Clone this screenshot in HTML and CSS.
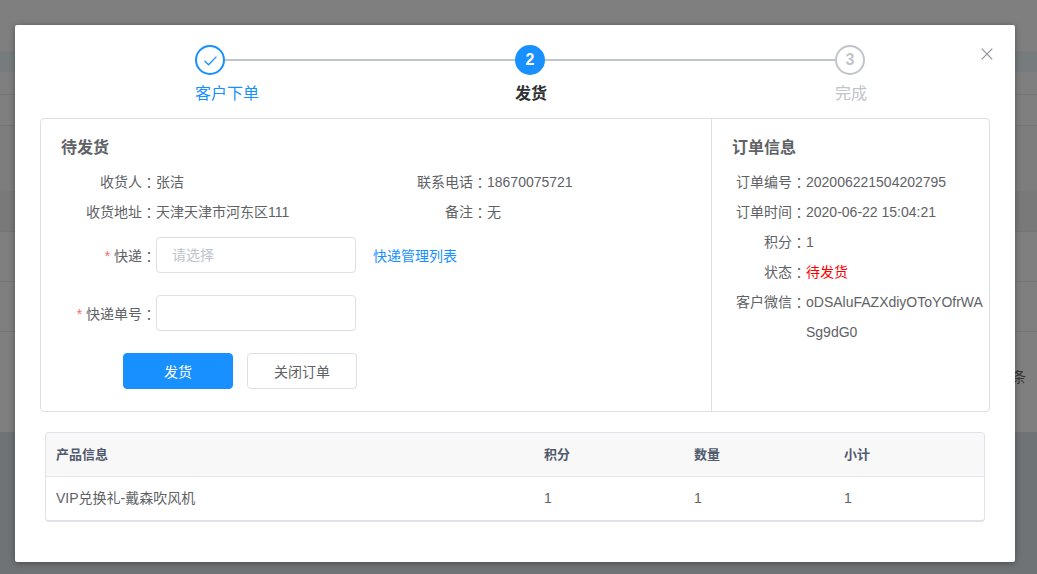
FILE: index.html
```html
<!DOCTYPE html>
<html>
<head>
  <meta charset="UTF-8" />
  <meta name="viewport" content="width=device-width, initial-scale=1.0"/>
  <title>发货</title>
  <link rel="stylesheet" href="styles.css">
</head>
<body>
  <!-- dimmed page behind the dialog -->
  <div class="page">
    <div class="band band-top"></div>
    <div class="band band-head"></div>
    <div class="band band-row band-22"></div>
    <div class="band band-row band-31"></div>
    <div class="band band-plain"></div>
    <div class="band band-row band-41"></div>
    <div class="band band-row band-50"></div>
    <div class="band band-row band-50"></div>
    <div class="band band-total"><span>条</span></div>
    <div class="band band-foot"></div>
  </div>

  <div class="mask">
    <div class="dialog">
      <svg class="close" viewBox="0 0 12 12" aria-label="关闭">
        <path d="M.7.7l10.6 10.6M11.3.7L.7 11.3" />
      </svg>

      <div class="steps">
        <div class="step done">
          <div class="step-head">
            <span class="step-icon">
              <svg viewBox="0 0 16 12"><path d="M1.5 6.2l4.4 4.4L14.5 1.8" /></svg>
            </span>
            <span class="step-line"></span>
          </div>
          <div class="step-title">客户下单</div>
        </div>
        <div class="step active">
          <div class="step-head">
            <span class="step-icon">2</span>
            <span class="step-line"></span>
          </div>
          <div class="step-title">发货</div>
        </div>
        <div class="step todo">
          <div class="step-head">
            <span class="step-icon">3</span>
          </div>
          <div class="step-title">完成</div>
        </div>
      </div>

      <div class="card">
        <div class="card-left">
          <h3 class="card-title">待发货</h3>
          <div class="info-grid">
            <div class="info-row"><span class="info-label">收货人<span class="colon">：</span></span><span>张洁</span></div>
            <div class="info-row"><span class="info-label">联系电话<span class="colon">：</span></span><span>18670075721</span></div>
            <div class="info-row"><span class="info-label">收货地址<span class="colon">：</span></span><span>天津天津市河东区111</span></div>
            <div class="info-row"><span class="info-label">备注<span class="colon">：</span></span><span>无</span></div>
          </div>

          <div class="form-row">
            <label class="form-label"><i>*</i> 快递<span class="colon">：</span></label>
            <div class="input placeholder">请选择</div>
            <a class="link">快递管理列表</a>
          </div>
          <div class="form-row">
            <label class="form-label"><i>*</i> 快递单号<span class="colon">：</span></label>
            <div class="input"></div>
          </div>
          <div class="actions">
            <button class="btn btn-primary">发货</button>
            <button class="btn">关闭订单</button>
          </div>
        </div>

        <div class="card-right">
          <h3 class="card-title">订单信息</h3>
          <div class="order-row"><span class="order-label">订单编号<span class="colon">：</span></span><span class="order-value">202006221504202795</span></div>
          <div class="order-row"><span class="order-label">订单时间<span class="colon">：</span></span><span class="order-value">2020-06-22 15:04:21</span></div>
          <div class="order-row"><span class="order-label">积分<span class="colon">：</span></span><span class="order-value">1</span></div>
          <div class="order-row"><span class="order-label">状态<span class="colon">：</span></span><span class="order-value red">待发货</span></div>
          <div class="order-row"><span class="order-label">客户微信<span class="colon">：</span></span><span class="order-value">oDSAluFAZXdiyOToYOfrWASg9dG0</span></div>
        </div>
      </div>

      <div class="table">
        <div class="table-row table-head">
          <div>产品信息</div><div>积分</div><div>数量</div><div>小计</div>
        </div>
        <div class="table-row">
          <div>VIP兑换礼-戴森吹风机</div><div>1</div><div>1</div><div>1</div>
        </div>
      </div>
    </div>
  </div>
</body>
</html>
```

FILE: styles.css
```css
* {
  box-sizing: border-box;
}

html, body {
  margin: 0;
  height: 100%;
  overflow: hidden;
}

body {
  background-color: #7f7f7f;
  font-family: "Liberation Sans", "Noto Sans CJK SC", sans-serif;
  font-size: 14px;
  color: #606266;
}

/* page behind the mask */
.band {
  border-bottom: 1px solid #757575;
}

.band-top {
  height: 51px;
  border-bottom: none;
}

.band-head {
  height: 21px;
  background: #767b7e;
  border-bottom: none;
}

.band-22 {
  height: 23px;
}

.band-31 {
  height: 31px;
}

.band-plain {
  height: 65px;
  background: #7d7d7d;
  border-bottom: none;
}

.band-41 {
  height: 41px;
  background: #797979;
}

.band-50 {
  height: 50px;
}

.band-total {
  height: 100px;
  border-bottom: none;
  display: flex;
  justify-content: flex-end;
  padding: 34px 11px 0 0;
  color: #333;
  font-size: 14px;
}

.band-foot {
  height: 142px;
  background: #6f7376;
  border-bottom: none;
}

/* dialog */
.mask {
  position: absolute;
  inset: 0;
  padding: 25px 0 0 15px;
}

.dialog {
  position: relative;
  width: 1000px;
  height: 537px;
  padding: 20px 25px 0;
  background: #fff;
  border-radius: 2px;
  box-shadow: 0 1px 6px rgba(0, 0, 0, 0.35);
}

.close {
  position: absolute;
  top: 23px;
  right: 22px;
  width: 12px;
  height: 12px;
  fill: none;
  stroke: #909399;
  stroke-width: 1.2;
}

/* steps */
.steps {
  display: flex;
  padding-left: 155px;
  height: 73px;
}

.step {
  flex: none;
  width: 320px;
}

.step.todo {
  width: 48px;
}

.step-head {
  display: flex;
  align-items: center;
  height: 30px;
}

.step-icon {
  display: flex;
  align-items: center;
  justify-content: center;
  flex: none;
  width: 30px;
  height: 30px;
  border: 2px solid #c0c4cc;
  border-radius: 50%;
  font-size: 16px;
  font-weight: bold;
}

.step-icon svg {
  width: 15px;
  height: 11px;
  fill: none;
  stroke: #1890ff;
  stroke-width: 1.4;
}

.step-line {
  flex: 1;
  height: 2px;
  background: #c0c4cc;
}

.step-title {
  margin-top: 8px;
  font-size: 16px;
  line-height: 22px;
}

.done .step-icon {
  border-color: #1890ff;
}

.done .step-title {
  color: #1890ff;
}

.active .step-icon {
  border-color: #1890ff;
  background: #1890ff;
  color: #fff;
}

.active .step-title {
  color: #303133;
  font-weight: bold;
}

.todo .step-icon {
  color: #c0c4cc;
}

.todo .step-title {
  color: #c0c4cc;
}

/* info card */
.card {
  display: flex;
  width: 950px;
  height: 294px;
  border: 1px solid #dcdfe6;
  border-radius: 4px;
}

.card-left {
  width: 671px;
  padding: 18px 20px 0;
  border-right: 1px solid #dcdfe6;
}

.card-right {
  flex: 1;
  padding: 18px 0 0 20px;
}

.card-title {
  margin: 0 0 8px;
  font-size: 16px;
  line-height: 22px;
  color: #606266;
}

/* the traditional face centres the full-width colon in its box */
.colon {
  font-family: "Noto Sans CJK TC", sans-serif;
  line-height: 0;
  vertical-align: -1px;
}

.info-grid {
  display: grid;
  grid-template-columns: 331px 1fr;
  margin-left: -5px;
}

.info-row {
  display: flex;
  line-height: 30px;
}

.info-label {
  width: 100px;
  text-align: right;
}

.form-row {
  display: flex;
  align-items: center;
  height: 36px;
  margin-top: 22px;
  margin-left: -5px;
}

.info-grid + .form-row {
  margin-top: 10px;
}

.form-label {
  width: 100px;
  text-align: right;
}

.form-label i {
  color: #f56c6c;
  font-style: normal;
}

.input {
  width: 200px;
  height: 36px;
  padding-left: 15px;
  border: 1px solid #dcdfe6;
  border-radius: 4px;
  line-height: 34px;
}

.placeholder {
  color: #c0c4cc;
}

.link {
  margin-left: 17px;
  color: #1890ff;
}

.actions {
  display: flex;
  gap: 14px;
  margin: 22px 0 0 62px;
}

.btn {
  width: 110px;
  height: 36px;
  padding: 0;
  border: 1px solid #dcdfe6;
  border-radius: 4px;
  background: #fff;
  color: #606266;
  font-family: inherit;
  font-size: 14px;
}

.btn-primary {
  border-color: #1890ff;
  background: #1890ff;
  color: #fff;
}

.order-row {
  display: flex;
  line-height: 30px;
}

.order-label {
  flex: none;
  width: 74px;
  text-align: right;
}

.order-value {
  width: 180px;
  word-break: break-all;
}

.red {
  color: #ff0000;
}

/* product table */
.table {
  width: 940px;
  margin: 20px 0 0 5px;
  border: 1px solid #dfe2e8;
  border-bottom-width: 2px;
  border-radius: 4px;
  overflow: hidden;
}

.table-row {
  display: grid;
  grid-template-columns: 488px 150px 150px 1fr;
  height: 43px;
  padding: 0 0 1px 10px;
  align-items: center;
  line-height: 20px;
}

.table-head {
  height: 44px;
  padding-bottom: 0;
  background: #f8f8f8;
  border-bottom: 1px solid #e4e7ed;
  font-size: 13px;
  font-weight: bold;
  color: #515a6e;
}
```
